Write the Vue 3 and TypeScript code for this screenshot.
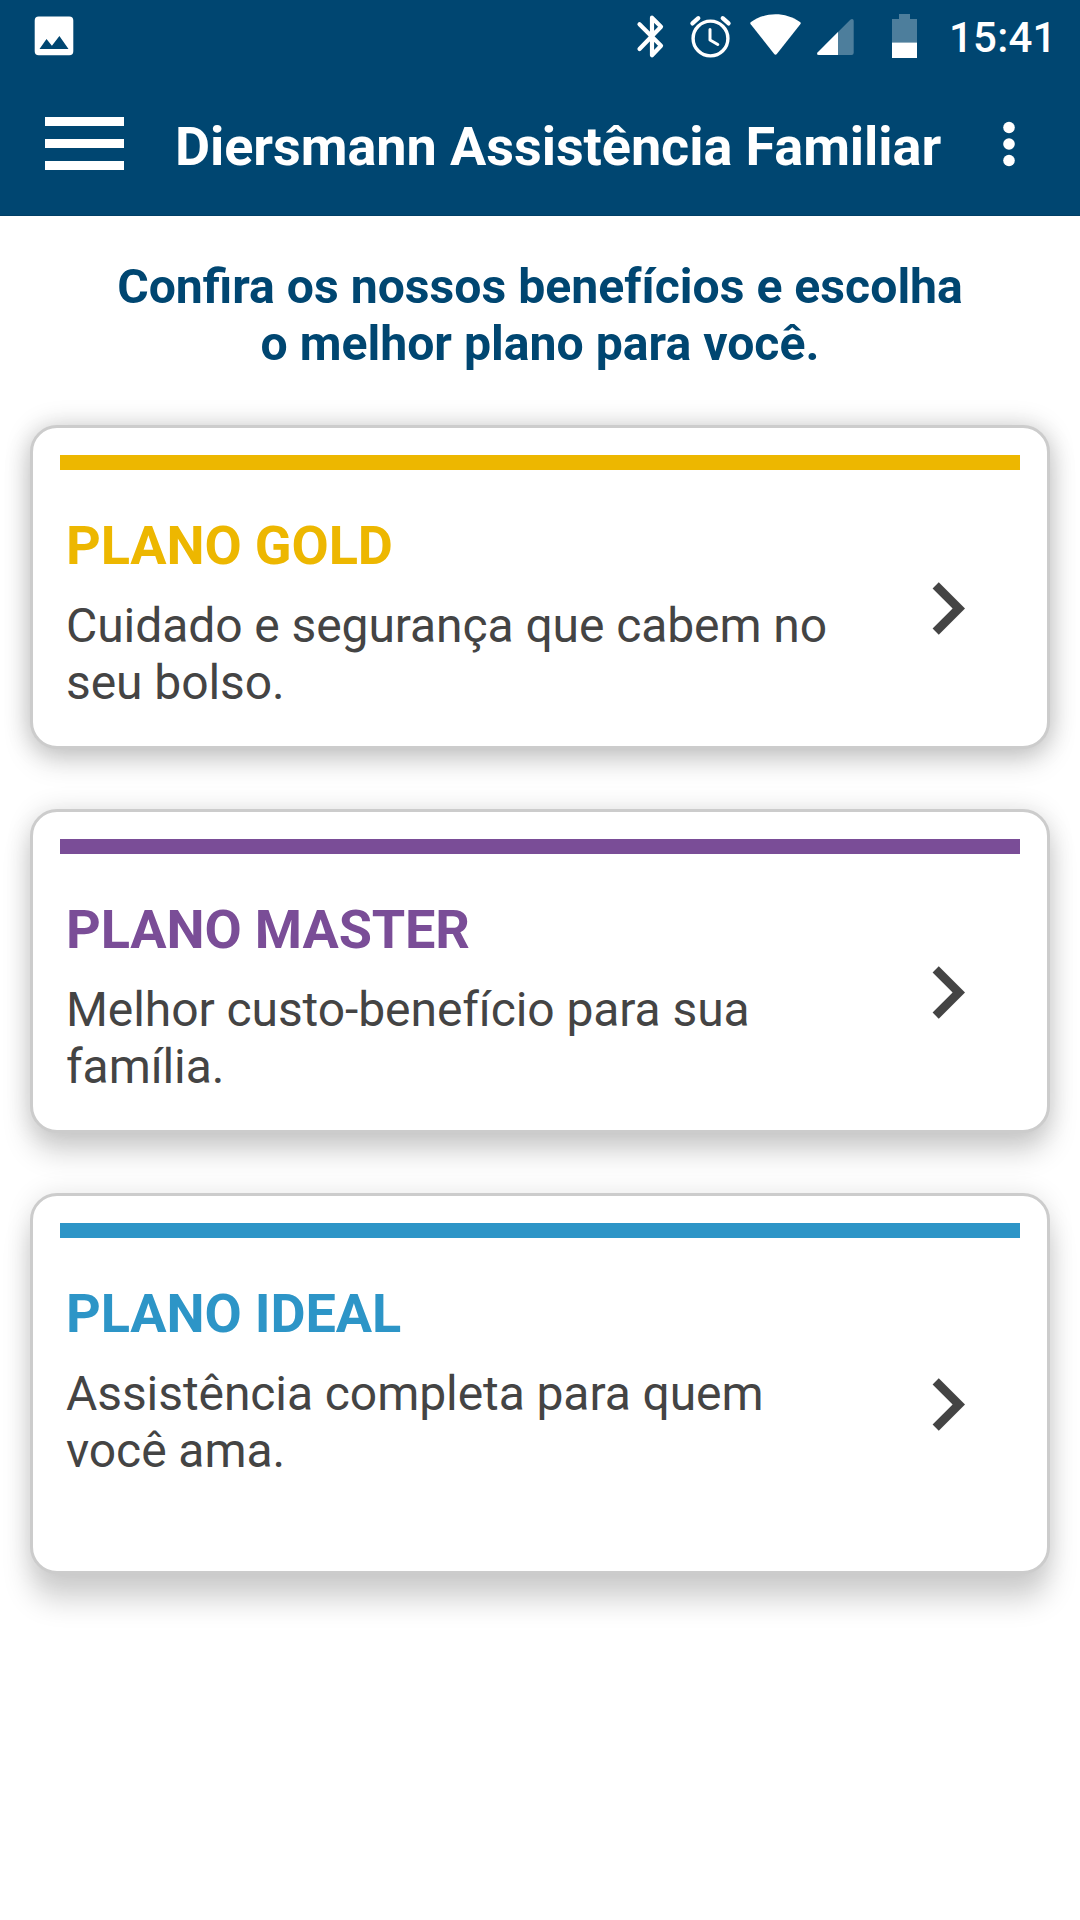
<script setup lang="ts">
interface Plan {
  id: string
  title: string
  lines: string[]
  color: string
}

const plans: Plan[] = [
  { id: 'gold', title: 'PLANO GOLD', lines: ['Cuidado e segurança que cabem no', 'seu bolso.'], color: '#edb700' },
  { id: 'master', title: 'PLANO MASTER', lines: ['Melhor custo-benefício para sua', 'família.'], color: '#7a4d97' },
  { id: 'ideal', title: 'PLANO IDEAL', lines: ['Assistência completa para quem', 'você ama.'], color: '#2d95c7' },
]
</script>

<template>
  <div class="screen">
    <header class="top">
      <div class="status">
        <svg class="photo" width="40" height="40" viewBox="34 16 40 40">
          <path fill="#fff" fill-rule="evenodd" d="M38.7 16.6h30.6a4 4 0 0 1 4 4v30.6a4 4 0 0 1-4 4H38.7a4 4 0 0 1-4-4V20.600a4 4 0 0 1 4-4zM39.500 49h29L59.400 36l-7.500 9.700L46.500 39z" />
        </svg>
        <svg class="tray" width="290" height="48" viewBox="632 12 290 48">
          <path d="M639.500 24.300L661 45.700L652 55.300V17.700L661 26.800L639.500 49" fill="none" stroke="#fff" stroke-width="4.200" stroke-linecap="round" stroke-linejoin="round" />
          <g fill="none" stroke="#fff" stroke-linecap="round" stroke-linejoin="round">
            <circle cx="710.500" cy="38.500" r="17.400" stroke-width="3.400" />
            <path d="M710 29.500V40L717.800 44.500" stroke-width="3" />
            <path d="M692.400 23.400L698.300 18.200M722.700 18.200L728.600 23.400" stroke-width="4.200" />
          </g>
          <path d="M750.700 24.200C750 23.300 750.200 22.600 751 22C766 11.700 785 11.700 800 22C800.800 22.600 801 23.300 800.300 24.200L777 53.800Q775.500 55.700 774 53.800Z" fill="#fff" />
          <path d="M817.800 52.200L850.300 19.700C852 18.300 853.700 19 853.700 21V52.800Q853.700 55 851.500 55H819C817 55 816.500 53.500 817.800 52.200Z" fill="#4d7e9c" />
          <path d="M817.800 52.200L838 32V55H819C817 55 816.500 53.500 817.800 52.200Z" fill="#fff" />
          <path d="M899 14h11v5h7v23.500h-25V19h7z" fill="#4d7e9c" />
          <path d="M892 42.500h25V58h-25z" fill="#fff" />
        </svg>
        <span class="clock">15:41</span>
      </div>
      <div class="bar">
        <svg class="menu" width="79" height="53" viewBox="0 0 79 53">
          <path d="M0 0h79v9H0zM0 22h79v9H0zM0 44h79v9H0z" fill="#fff" />
        </svg>
        <h1 class="name">Diersmann Assistência Familiar</h1>
        <svg class="more" width="12" height="46" viewBox="0 0 12 46">
          <circle cx="6" cy="6.500" r="5.800" fill="#fff" />
          <circle cx="6" cy="23" r="5.800" fill="#fff" />
          <circle cx="6" cy="39.500" r="5.800" fill="#fff" />
        </svg>
      </div>
    </header>
    <main>
      <p class="lead">Confira os nossos benefícios e escolha<br />o melhor plano para você.</p>
      <section class="plans">
        <article v-for="plan in plans" :key="plan.id" class="card" :class="plan.id">
          <div class="stripe" :style="{ background: plan.color }"></div>
          <div class="body">
            <div class="copy">
              <h2 :style="{ color: plan.color }">{{ plan.title }}</h2>
              <p><template v-for="(line, i) in plan.lines" :key="i"><br v-if="i > 0" />{{ line }}</template></p>
            </div>
            <svg class="chevron" width="105" height="105" viewBox="0 0 24 24">
              <path d="M10 6L8.590 7.410 13.170 12l-4.580 4.590L10 18l6-6z" fill="#444" />
            </svg>
          </div>
        </article>
      </section>
    </main>
  </div>
</template>

<style>
body {
  background: #fff;
}
</style>

<style scoped>
.screen {
  width: 1080px;
  height: 1920px;
  overflow: hidden;
  background: #fff;
  font-family: Roboto, 'Liberation Sans', sans-serif;
}
h1,
h2,
p {
  margin: 0;
}
svg {
  display: block;
  flex: none;
}
.top {
  height: 216px;
  background: #004671;
  box-sizing: border-box;
  border-bottom: 1px solid #003f66;
}
.status {
  display: flex;
  height: 72px;
  padding: 0 32px 0 34px;
}
.photo {
  margin-top: 16px;
}
.tray {
  margin: 12px 0 0 auto;
}
.clock {
  margin: 13px 0 0 27px;
  width: 99px;
  color: #fff;
  font-size: 42px;
  font-weight: 500;
  line-height: 49px;
  letter-spacing: 0.2px;
  white-space: nowrap;
}
.bar {
  display: flex;
  padding: 0 65px 0 45px;
}
.menu {
  margin-top: 45px;
}
.name {
  margin: 43px 0 0 51px;
  color: #fff;
  font-size: 54px;
  font-weight: 700;
  line-height: 63px;
  letter-spacing: -0.06px;
  white-space: nowrap;
}
.more {
  margin: 49px 0 0 auto;
}
.lead {
  padding-top: 42px;
  color: #004671;
  font-size: 48.16px;
  font-weight: 700;
  line-height: 57px;
  text-align: center;
}
.plans {
  display: flex;
  flex-direction: column;
  gap: 60px;
  padding: 53px 30px 0;
}
.card {
  display: flex;
  flex-direction: column;
  box-sizing: border-box;
  height: 324px;
  padding: 27px 27px 0;
  border: 3px solid #ccc;
  border-radius: 27px;
  background: #fff;
  box-shadow: 0 13px 28px rgba(0, 0, 0, 0.15), 0 0 26px rgba(0, 0, 0, 0.18);
}
.card.master {
  box-shadow: 0 20px 28px rgba(0, 0, 0, 0.17), 0 0 26px rgba(0, 0, 0, 0.12);
}
.card.ideal {
  height: 381px;
  box-shadow: 0 27px 28px rgba(0, 0, 0, 0.17), 0 0 26px rgba(0, 0, 0, 0.1);
}
.stripe {
  height: 15px;
  flex: none;
}
.body {
  display: flex;
  flex: 1;
  align-items: stretch;
  justify-content: space-between;
  padding: 0 20px 0 6px;
}
.copy {
  padding-top: 44px;
}
.copy h2 {
  font-size: 54px;
  font-weight: 700;
  line-height: 63px;
  letter-spacing: -0.12px;
}
.copy p {
  margin-top: 20px;
  color: #444;
  font-size: 48px;
  line-height: 57px;
  letter-spacing: -0.08px;
  white-space: nowrap;
}
.chevron {
  align-self: center;
}
</style>
